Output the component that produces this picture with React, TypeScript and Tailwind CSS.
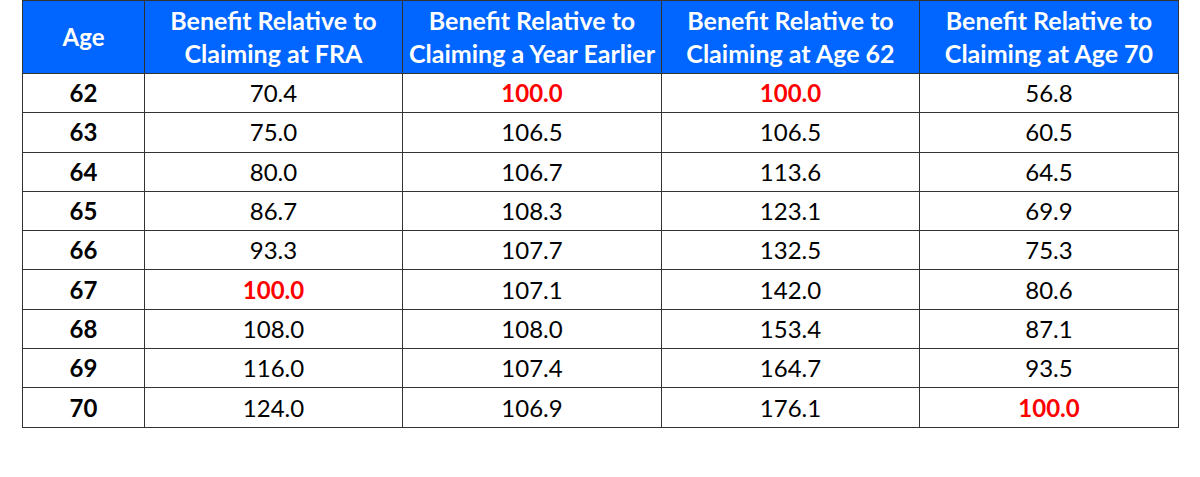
import React from "react";

type Cell = { v: string; red?: boolean };

const rows: [string, Cell, Cell, Cell, Cell][] = [
  ["62", { v: "70.4" }, { v: "100.0", red: true }, { v: "100.0", red: true }, { v: "56.8" }],
  ["63", { v: "75.0" }, { v: "106.5" }, { v: "106.5" }, { v: "60.5" }],
  ["64", { v: "80.0" }, { v: "106.7" }, { v: "113.6" }, { v: "64.5" }],
  ["65", { v: "86.7" }, { v: "108.3" }, { v: "123.1" }, { v: "69.9" }],
  ["66", { v: "93.3" }, { v: "107.7" }, { v: "132.5" }, { v: "75.3" }],
  ["67", { v: "100.0", red: true }, { v: "107.1" }, { v: "142.0" }, { v: "80.6" }],
  ["68", { v: "108.0" }, { v: "108.0" }, { v: "153.4" }, { v: "87.1" }],
  ["69", { v: "116.0" }, { v: "107.4" }, { v: "164.7" }, { v: "93.5" }],
  ["70", { v: "124.0" }, { v: "106.9" }, { v: "176.1" }, { v: "100.0", red: true }],
];

const headers = [
  ["Benefit Relative to", "Claiming at FRA"],
  ["Benefit Relative to", "Claiming a Year Earlier"],
  ["Benefit Relative to", "Claiming at Age 62"],
  ["Benefit Relative to", "Claiming at Age 70"],
];

export default function App() {
  return (
    <div
      className="w-[1200px] h-[477px] bg-white pl-[22px]"
      style={{ fontFamily: "Lato, 'Open Sans', sans-serif" }}
    >
      <table className="table-fixed border-collapse w-[1156px]">
        <colgroup>
          <col className="w-[122px]" />
          <col className="w-[258px]" />
          <col className="w-[259px]" />
          <col className="w-[258px]" />
          <col className="w-[259px]" />
        </colgroup>
        <thead>
          <tr className="h-[73px] bg-[#0066ff] text-white">
            <th className="border border-[#333] text-[24px] font-bold text-center p-0">Age</th>
            {headers.map((h, i) => (
              <th
                key={i}
                className="border border-[#333] text-[25px] font-bold text-center leading-[33px] p-0 whitespace-nowrap"
              >
                <div>{h[0]}</div>
                <div>{h[1]}</div>
              </th>
            ))}
          </tr>
        </thead>
        <tbody>
          {rows.map((r, i) => (
            <tr key={i} className="h-[39.3px]">
              <td className="border border-[#333] text-center font-bold text-[24px] text-black p-0 leading-none">
                {r[0]}
              </td>
              {[r[1], r[2], r[3], r[4]].map((c, j) => (
                <td
                  key={j}
                  className={
                    c.red
                      ? "border border-[#333] text-center text-[24px] p-0 leading-none font-bold text-[#ff0000]"
                      : "border border-[#333] text-center text-[24px] p-0 leading-none text-black"
                  }
                >
                  {c.v}
                </td>
              ))}
            </tr>
          ))}
        </tbody>
      </table>
    </div>
  );
}
